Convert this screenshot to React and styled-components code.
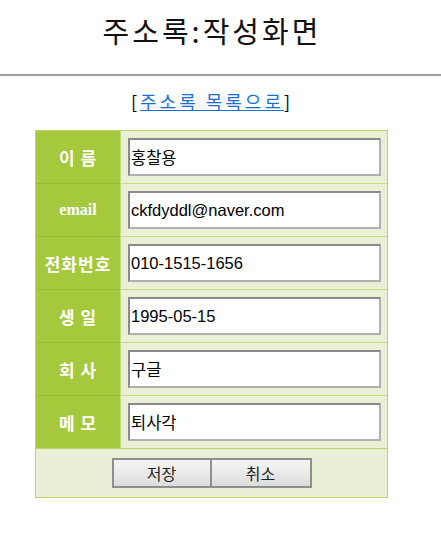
import React from 'react';
import styled, { createGlobalStyle } from 'styled-components';

const GlobalStyle = createGlobalStyle`
  body {
    margin: 0;
    background: #fff;
    font-family: "Liberation Sans", "Noto Sans CJK KR", sans-serif;
  }
`;

const Page = styled.div`
  width: 424px;
  padding-top: 10px;
`;

const Title = styled.h2`
  margin: 0;
  height: 40px;
  line-height: 40px;
  text-align: center;
  font-family: "Noto Sans CJK KR", sans-serif;
  font-size: 29px;
  font-weight: 400;
  letter-spacing: 3px;
  color: #111;
`;

const Rule = styled.hr`
  width: 441px;
  height: 2px;
  margin: 24px 0 0;
  border: none;
  background: #a0a0a0;
`;

const Nav = styled.div`
  margin-top: 12px;
  height: 26px;
  line-height: 26px;
  text-align: center;
  font-family: "Noto Sans CJK KR", sans-serif;
  font-size: 18px;
  letter-spacing: 3px;
  color: #000;

  a {
    color: #1a6fd0;
    text-decoration: underline;
  }
`;

const Form = styled.form`
  display: grid;
  grid-template-columns: 84px 1fr;
  width: 351px;
  margin: 16px 0 0 35px;
  border: 1px solid #b9d66c;
  background: #e9f0d5;
`;

const Label = styled.div`
  display: flex;
  align-items: center;
  justify-content: center;
  height: 52px;
  background: #a6c83c;
  border-top: ${(p) => (p.$first ? 'none' : '1px solid #98bb2e')};
  color: #fff;
  font-weight: bold;
  font-size: ${(p) => (p.$serif ? '16px' : '17px')};
  letter-spacing: ${(p) => (p.$serif ? '0' : '1px')};
  font-family: ${(p) =>
    p.$serif ? '"Liberation Serif", serif' : '"Noto Sans CJK KR", sans-serif'};
`;

const Cell = styled.div`
  display: flex;
  align-items: center;
  height: 52px;
  padding: 0 6px 0 7px;
  border-top: ${(p) => (p.$first ? 'none' : '1px solid #c3dc82')};
  border-left: 1px solid #c3dc82;
`;

const Field = styled.input`
  box-sizing: border-box;
  width: 100%;
  height: 38px;
  padding: 0 1px;
  border: 2px solid #8a8a8a;
  border-right-color: #b0b0b0;
  border-bottom-color: #b0b0b0;
  background: #fff;
  font-family: "Liberation Sans", "Noto Sans CJK KR", sans-serif;
  font-size: 16.5px;
  color: #000;
  outline: none;
`;

const Actions = styled.div`
  grid-column: 1 / -1;
  display: flex;
  justify-content: center;
  align-items: flex-start;
  height: 49px;
  padding-top: 9px;
  box-sizing: border-box;
  border-top: 1px solid #b9d66c;
`;

const Button = styled.button`
  width: 100px;
  height: 30px;
  padding: 0;
  border: 2px solid #8e8e8e;
  border-left-width: ${(p) => (p.$joined ? '0' : '2px')};
  background: linear-gradient(#f6f6f6, #dcdcdc);
  font-family: "Noto Sans CJK KR", sans-serif;
  font-size: 16px;
  color: #222;
`;

const rows = [
  { label: '이 름', value: '홍찰용' },
  { label: 'email', value: 'ckfdyddl@naver.com', serif: true },
  { label: '전화번호', value: '010-1515-1656' },
  { label: '생 일', value: '1995-05-15' },
  { label: '회 사', value: '구글' },
  { label: '메 모', value: '퇴사각' },
];

export default function App() {
  return (
    <>
      <GlobalStyle />
      <Page>
        <Title>주소록:작성화면</Title>
        <Rule />
        <Nav>
          [<a href="#list">주소록 목록으로</a>]
        </Nav>
        <Form onSubmit={(e) => e.preventDefault()}>
          {rows.map((row, i) => (
            <React.Fragment key={row.label}>
              <Label $first={i === 0} $serif={row.serif}>
                {row.label}
              </Label>
              <Cell $first={i === 0}>
                <Field defaultValue={row.value} />
              </Cell>
            </React.Fragment>
          ))}
          <Actions>
            <Button type="submit">저장</Button>
            <Button type="reset" $joined>
              취소
            </Button>
          </Actions>
        </Form>
      </Page>
    </>
  );
}
